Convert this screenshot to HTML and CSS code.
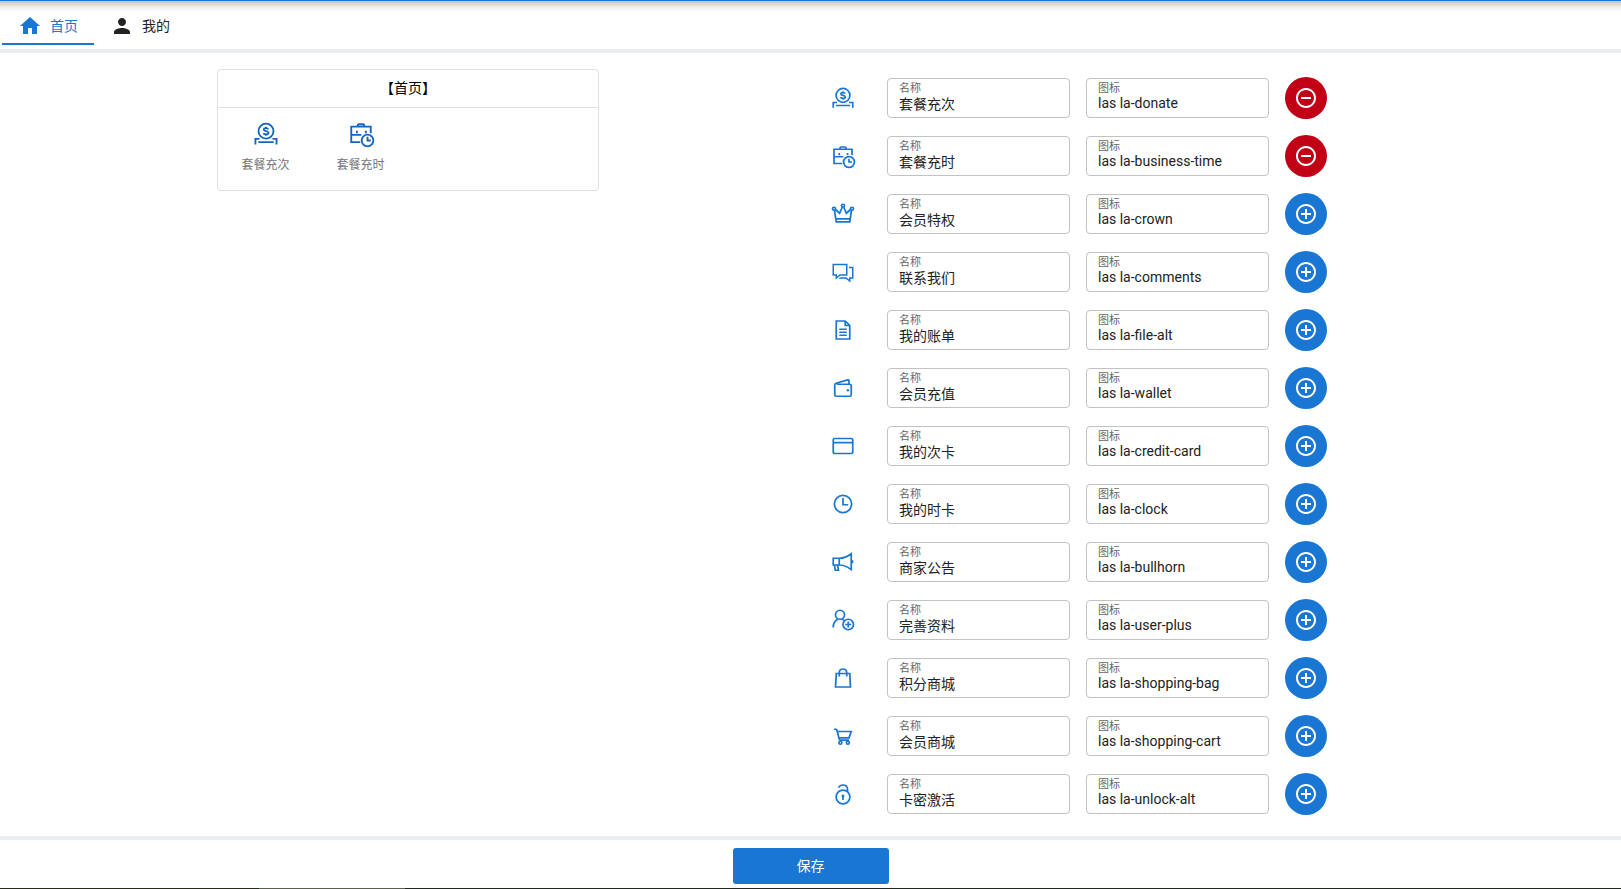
FILE: index.html
```html
<!DOCTYPE html>
<html lang="zh-CN">
<head>
<meta charset="utf-8">
<title>首页</title>
<link rel="stylesheet" href="styles.css">
</head>
<body>
<svg class="defs" aria-hidden="true">
  <symbol id="donate" viewBox="0 0 32 32"><circle cx="16" cy="12.5" r="9.2"/><path d="M8 22H3v7M24 22h5v7M6.500 26h19M18.800 10.200c-.4-1-1.400-1.500-2.800-1.500-1.700 0-2.800.7-2.800 1.900 0 2.700 5.800 1.200 5.800 4 0 1.200-1.200 2-3 2-1.600 0-2.800-.7-3.100-1.800M16 7v1.700M16 16.600v1.700"/></symbol>
  <symbol id="business-time" viewBox="0 0 32 32"><path d="M12 7V5.500Q12 4 13.500 4h5Q20 4 20 5.500V7M28 15V7H4v19h11M4 17h12.500M11 12v3M22 12v3M24 19.500V24h4"/><circle cx="24" cy="24" r="7.200"/></symbol>
  <symbol id="crown" viewBox="0 0 32 32"><circle cx="16" cy="5" r="2"/><circle cx="4" cy="9" r="2"/><circle cx="28" cy="9" r="2"/><path d="M4.600 11 7 26.500h18L27.400 11M6 10l5.500 5L15 7M26 10l-5.500 5L17 7M6.500 22.500h19"/></symbol>
  <symbol id="comments" viewBox="0 0 32 32"><path class="solid" d="M2 5v16h4v5.100L12.350 21H22V5zm2 2h16v12h-8.350L8 21.900V19H4zm20 2v2h4v12h-4v2.900L20.350 23h-8.100l-2.500 2h9.900L26 30.100V25h4V9z"/></symbol>
  <symbol id="file-alt" viewBox="0 0 32 32"><path d="M7 4v24h18V10l-6-6zM19 4v6h6M11 15h10M11 19h10M11 23h10"/></symbol>
  <symbol id="wallet" viewBox="0 0 32 32"><path d="M24 11V6.500Q24 4.600 22.200 5.100L6.800 9.600Q5 10.200 5 12v13Q5 27 7 27h18q2 0 2-2V13q0-2-2-2H7.500"/><circle class="solid" cx="22.500" cy="19" r="1.600"/></symbol>
  <symbol id="credit-card" viewBox="0 0 32 32"><rect x="3" y="6" width="26" height="20" rx="2"/><path d="M3 11.500h26"/></symbol>
  <symbol id="clock" viewBox="0 0 32 32"><circle cx="16" cy="16" r="11.500"/><path d="M16 8v9h7"/></symbol>
  <symbol id="bullhorn" viewBox="0 0 32 32"><path d="M3 11h8q8 0 16-6v21q-8-6-16-6H3zM11 11v9M4.500 20l1.200 7h4.200l-1.200-7"/><path class="solid" d="M27 13q3 0 3 2.500T27 18z"/></symbol>
  <symbol id="user-plus" viewBox="0 0 32 32"><circle cx="12" cy="9" r="6"/><path d="M3 26q0-8 6-11M15 15l2.500 1.500M23 18v8M19 22h8"/><circle cx="23" cy="22" r="7"/></symbol>
  <symbol id="shopping-bag" viewBox="0 0 32 32"><path d="M7 10h18l1 18H6zM11 14V9q0-5 5-5t5 5v5"/></symbol>
  <symbol id="shopping-cart" viewBox="0 0 32 32"><path d="M4 7h2.500q1 0 1.300 1L11 20.500q.3 1 1.300 1H24M8.300 10H27l-3 8.500H10.500"/><circle cx="12.500" cy="25" r="2"/><circle cx="22.500" cy="25" r="2"/></symbol>
  <symbol id="unlock-alt" viewBox="0 0 32 32"><circle cx="16" cy="20" r="9.200"/><path d="M10 7.500Q12 4 16 4q6 0 6 6v3M16 19v5"/><circle class="solid" cx="16" cy="18.500" r="2"/></symbol>
  <symbol id="home" viewBox="0 0 24 24"><path d="M10 20v-6h4v6h5v-8h3L12 3 2 12h3v8z"/></symbol>
  <symbol id="person" viewBox="0 0 24 24"><path d="M12 12c2.210 0 4-1.790 4-4s-1.790-4-4-4-4 1.790-4 4 1.790 4 4 4zm0 2c-2.670 0-8 1.340-8 4v2h16v-2c0-2.660-5.330-4-8-4z"/></symbol>
  <symbol id="add" viewBox="0 0 24 24"><path d="M13 7h-2v4H7v2h4v4h2v-4h4v-2h-4V7zm-1-5C6.480 2 2 6.480 2 12s4.480 10 10 10 10-4.480 10-10S17.520 2 12 2zm0 18c-4.410 0-8-3.590-8-8s3.590-8 8-8 8 3.590 8 8-3.590 8-8 8z"/></symbol>
  <symbol id="remove" viewBox="0 0 24 24"><path d="M7 11v2h10v-2H7zm5-9C6.480 2 2 6.480 2 12s4.480 10 10 10 10-4.480 10-10S17.520 2 12 2zm0 18c-4.410 0-8-3.590-8-8s3.590-8 8-8 8 3.590 8 8-3.590 8-8 8z"/></symbol>
</svg>
<div class="page">
  <header class="header">
    <nav class="tabs">
      <button class="tab active"><svg class="fill-icon"><use href="#home"/></svg><span>首页</span></button>
      <button class="tab"><svg class="fill-icon"><use href="#person"/></svg><span>我的</span></button>
    </nav>
  </header>
  <main class="main">
    <section class="preview">
      <div class="card">
        <h1 class="card-title">【首页】</h1>
        <div class="card-items">
          <div class="card-item"><svg class="line-icon large"><use href="#donate"/></svg>套餐充次</div>
          <div class="card-item"><svg class="line-icon large"><use href="#business-time"/></svg>套餐充时</div>
        </div>
      </div>
    </section>
    <section class="list" id="list"></section>
  </main>
  <footer class="footer"><button class="save">保存</button></footer>
  <div class="edge"></div>
</div>
<script src="app.js"></script>
</body>
</html>
```

FILE: styles.css
```css
* { box-sizing: border-box; }
body {
  margin: 0;
  font-family: Roboto, "Noto Sans CJK SC", sans-serif;
  font-size: 14px;
  color: #222;
  background: #fff;
}
button, input { font: inherit; }
.defs { display: none; }
.page {
  display: flex;
  flex-direction: column;
  min-height: 100vh;
  border-top: 1px solid #1976d2;
}
.header {
  height: 52px;
  padding: 6px 2px 0;
  border-bottom: 4px solid #ebeef0;
  background: linear-gradient(#c4c4c4, #eee 6px, #fff 11px);
}
.tabs { display: flex; }
.tab {
  display: flex;
  align-items: center;
  gap: 8px;
  height: 38px;
  padding: 2px 16px 0;
  border: 0;
  border-bottom: 2px solid transparent;
  background: none;
  color: #222;
  cursor: pointer;
}
.tab.active { color: #1976d2; border-bottom-color: #1976d2; }
.tab span { padding-bottom: 2px; }
.fill-icon { flex: none; width: 24px; height: 24px; fill: currentColor; }
.main {
  flex: 1;
  display: grid;
  grid-template-columns: 1fr 1fr;
  padding-right: 1px;
}
.preview { padding: 16px 0 0 6px; }
.card {
  width: 382px;
  margin: 0 auto;
  border: 1px solid #e0e0e0;
  border-radius: 4px;
}
.card-title {
  margin: 0;
  padding: 8px;
  border-bottom: 1px solid #e0e0e0;
  color: #000;
  font-size: 14px;
  font-weight: 400;
  line-height: 21px;
  text-align: center;
}
.card-items { display: grid; grid-template-columns: repeat(4, 1fr); padding: 13px 0 16px; }
.card-item {
  display: flex;
  flex-direction: column;
  align-items: center;
  gap: 9px;
  color: #757575;
  font-size: 12px;
  line-height: 18px;
}
.line-icon {
  width: 24px;
  height: 24px;
  overflow: visible;
  fill: none;
  stroke: #1976d2;
  stroke-width: 2.3;
}
.line-icon.large { width: 26px; height: 26px; stroke: #1565c0; }
symbol { overflow: visible; }
.solid { fill: #1976d2; stroke: none; }
.list {
  display: flex;
  flex-direction: column;
  gap: 16px;
  padding: 24px 0 20px 21px;
}
.row { display: flex; align-items: center; gap: 16px; height: 42px; }
.row .line-icon { margin-right: 16px; }
.field {
  display: flex;
  flex-direction: column;
  width: 183px;
  height: 40px;
  padding: 4px 11px;
  border: 1px solid #c2c2c2;
  border-radius: 4px;
}
.field label { color: #666; font-size: 11px; line-height: 12px; }
.field input {
  width: 100%;
  height: 16px;
  padding: 0;
  border: 0;
  outline: 0;
  background: none;
  color: #222;
}
.round {
  display: flex;
  align-items: center;
  justify-content: center;
  width: 42px;
  height: 42px;
  padding: 0;
  border: 0;
  border-radius: 50%;
  background: #1976d2;
  color: #fff;
  cursor: pointer;
}
.round.remove { background: #c10015; }
.footer {
  display: flex;
  justify-content: center;
  height: 52px;
  padding-top: 8px;
  border-top: 4px solid #ebeef0;
}
.save {
  width: 156px;
  height: 36px;
  padding: 0 0 2px;
  border: 0;
  border-radius: 3px;
  background: #1976d2;
  color: #fff;
  cursor: pointer;
}
.edge {
  height: 1px;
  background: linear-gradient(to right, #262c1c 16%, #5b5d4d 16% 25%, #1f2820 25%);
}
```

FILE: app.js
```js
const items = [
  ["套餐充次", "donate", true],
  ["套餐充时", "business-time", true],
  ["会员特权", "crown"],
  ["联系我们", "comments"],
  ["我的账单", "file-alt"],
  ["会员充值", "wallet"],
  ["我的次卡", "credit-card"],
  ["我的时卡", "clock"],
  ["商家公告", "bullhorn"],
  ["完善资料", "user-plus"],
  ["积分商城", "shopping-bag"],
  ["会员商城", "shopping-cart"],
  ["卡密激活", "unlock-alt"]
];

document.getElementById("list").innerHTML = items.map(([name, icon, added], i) => `
  <div class="row">
    <svg class="line-icon"><use href="#${icon}"/></svg>
    <div class="field"><label for="name-${i}">名称</label><input id="name-${i}" value="${name}"></div>
    <div class="field"><label for="icon-${i}">图标</label><input id="icon-${i}" value="las la-${icon}"></div>
    <button class="round ${added ? "remove" : "add"}" aria-label="${added ? "移除" : "添加"}"><svg class="fill-icon"><use href="#${added ? "remove" : "add"}"/></svg></button>
  </div>`).join("");
```
